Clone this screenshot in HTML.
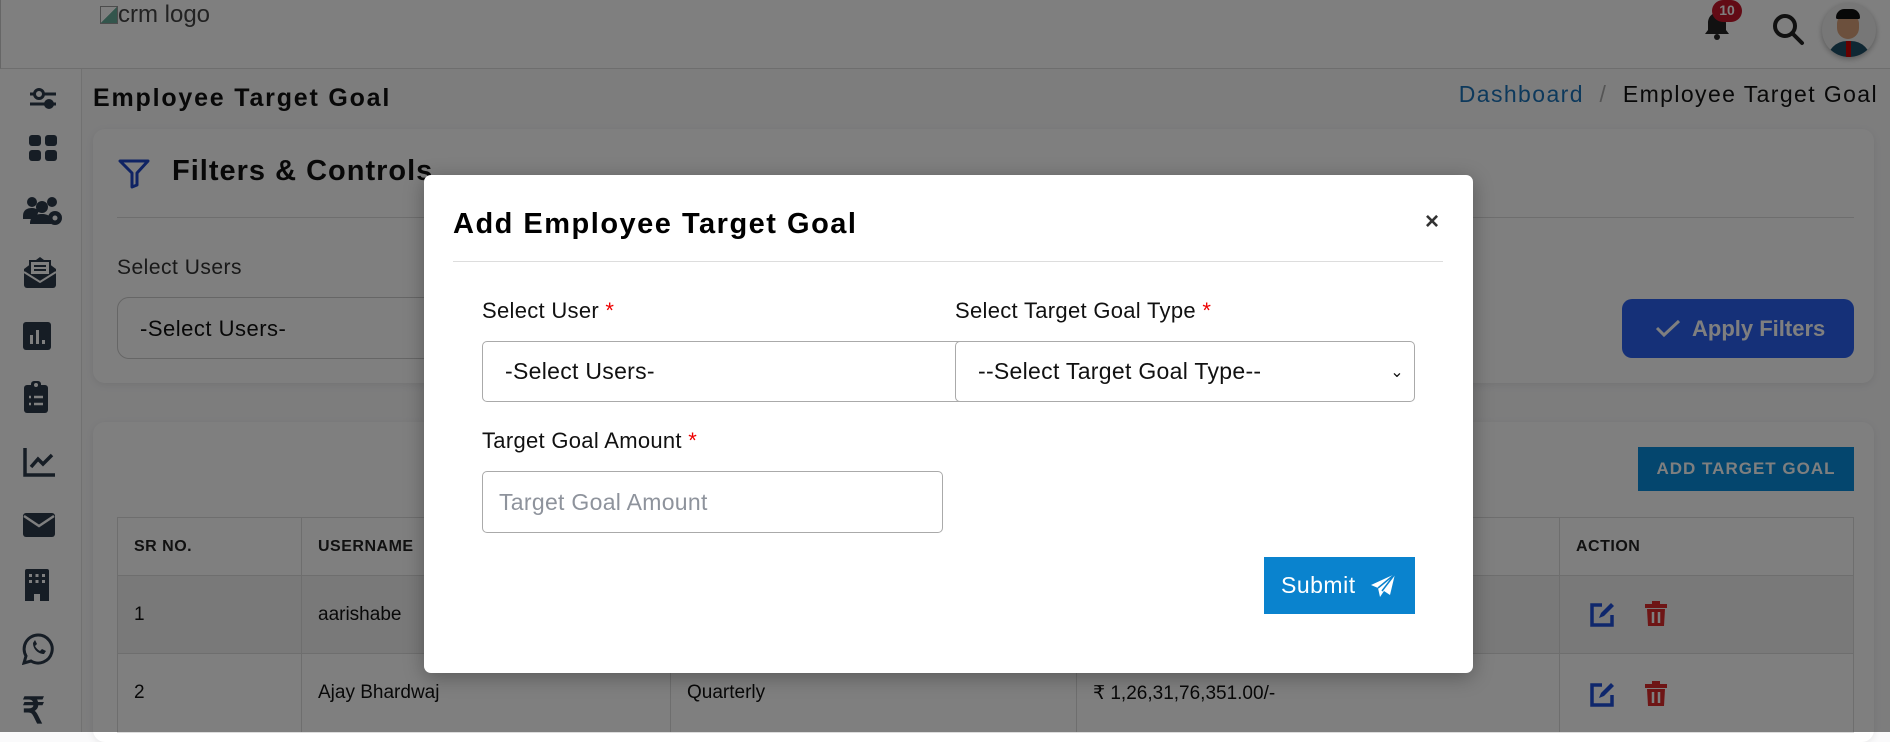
<!DOCTYPE html>
<html><head><meta charset="utf-8"><style>
*{box-sizing:border-box;margin:0;padding:0}
body{width:1890px;height:732px;overflow:hidden;background:#fafafb;font-family:"Liberation Sans",sans-serif;position:relative;color:#111}
.abs{position:absolute}
.hdr{left:0;top:0;width:1890px;height:69px;background:#fff;border-bottom:1px solid #ddd;border-left:1px solid #ccc}
.side{left:0;top:69px;width:82px;height:663px;background:#fff;border-right:1px solid #e3e3e3}
.card{background:#fff;border-radius:12px;box-shadow:0 2px 8px rgba(0,0,0,.08)}
table{border-collapse:collapse;position:absolute;left:117px;top:517px;width:1737px;font-size:19px}
td,th{border:1px solid #ddd;text-align:left;padding-left:16px}
th{height:58px;font-size:16px;font-weight:bold;color:#222;letter-spacing:.5px}
tr.r1 td{height:78px;background:#f2f2f2}
tr.r2 td{height:79px}
.ov{left:0;top:0;width:1890px;height:732px;background:rgba(0,0,0,.5)}
.modal{left:424px;top:175px;width:1049px;height:498px;background:#fff;border-radius:7px}
.lbl{font-size:22px;color:#111;letter-spacing:.3px}
.req{color:#e00}
.inp{border:1px solid #aaa;border-radius:5px;background:#fff;font-size:23px;display:flex;align-items:center;letter-spacing:.3px}
</style></head><body>
<div class="abs hdr"></div>
<div class="abs" style="left:100px;top:1px;font-size:24px;color:#444"><span style="display:inline-block;width:18px;height:18px;border:1px solid #999;background:linear-gradient(135deg,#fff 50%,#6a9 50%);vertical-align:-2px"></span>crm logo</div>
<svg class="abs" style="left:1700px;top:10px" width="34" height="32" viewBox="0 0 34 32"><path d="M17 3c-6 0-9 5-9 10v7l-3 4h24l-3-4v-7c0-5-3-10-9-10z" fill="#222"/><circle cx="17" cy="27" r="3" fill="#222"/></svg>
<div class="abs" style="left:1712px;top:0;width:30px;height:22px;border-radius:11px;background:#c4162a;color:#fff;font-size:14px;font-weight:bold;text-align:center;line-height:20px">10</div>
<svg class="abs" style="left:1770px;top:12px" width="36" height="34"><circle cx="15" cy="14" r="10" stroke="#222" stroke-width="4" fill="none"/><path d="M22 21l10 10" stroke="#222" stroke-width="4" stroke-linecap="round"/></svg>
<div class="abs" style="left:1822px;top:3px;width:54px;height:54px;border-radius:50%;background:#eee;overflow:hidden;box-shadow:0 2px 6px rgba(0,0,0,.3)">
<div class="abs" style="left:15px;top:10px;width:22px;height:26px;border-radius:11px;background:#d9a07a"></div>
<div class="abs" style="left:14px;top:6px;width:24px;height:10px;border-radius:10px 10px 2px 2px;background:#111"></div>
<div class="abs" style="left:5px;top:38px;width:44px;height:24px;border-radius:20px 20px 0 0;background:#1f4f67"></div>
<div class="abs" style="left:24px;top:38px;width:5px;height:16px;background:#c00"></div></div>
<div class="abs side"></div>
<svg class="abs" style="left:26px;top:84px" width="34" height="30"><path d="M4 10h26M4 20h26" stroke="#2d3a4b" stroke-width="3"/><circle cx="13" cy="10" r="4.5" fill="#fff" stroke="#2d3a4b" stroke-width="3"/><circle cx="23" cy="20" r="5" fill="#2d3a4b"/></svg>
<svg class="abs" style="left:28px;top:134px" width="30" height="30"><rect x="1" y="1" width="12" height="11" rx="3" fill="#2d3a4b"/><rect x="17" y="1" width="12" height="11" rx="3" fill="#2d3a4b"/><rect x="1" y="16" width="12" height="11" rx="3" fill="#2d3a4b"/><rect x="17" y="16" width="12" height="11" rx="3" fill="#2d3a4b"/></svg>
<svg class="abs" style="left:22px;top:194px" width="42" height="32"><circle cx="10" cy="8" r="5" fill="#2d3a4b"/><circle cx="30" cy="8" r="5" fill="#2d3a4b"/><circle cx="20" cy="13" r="6" fill="#2d3a4b"/><path d="M1 22c0-6 4-8 9-8s7 3 7 3l-4 8H1z M8 30c0-8 5-10 12-10s9 4 9 4v6z" fill="#2d3a4b"/><circle cx="33" cy="24" r="7" fill="#2d3a4b"/><circle cx="33" cy="24" r="2.5" fill="#fff"/></svg>
<svg class="abs" style="left:22px;top:255px" width="36" height="34"><path d="M2 14l16-12 16 12v16a3 3 0 0 1-3 3H5a3 3 0 0 1-3-3z" fill="#2d3a4b"/><rect x="8" y="6" width="20" height="14" fill="#fff" stroke="#2d3a4b" stroke-width="2"/><path d="M12 11h12M12 15h12" stroke="#2d3a4b" stroke-width="2"/><path d="M2 17l16 10 16-10" stroke="#fff" stroke-width="2" fill="none"/></svg>
<svg class="abs" style="left:22px;top:321px" width="30" height="30"><rect x="1" y="1" width="28" height="28" rx="3" fill="#2d3a4b"/><rect x="8" y="14" width="3" height="9" fill="#fff"/><rect x="14" y="9" width="3" height="14" fill="#fff"/><rect x="20" y="19" width="3" height="4" fill="#fff"/></svg>
<svg class="abs" style="left:23px;top:380px" width="26" height="34"><rect x="1" y="5" width="24" height="28" rx="3" fill="#2d3a4b"/><rect x="8" y="1" width="10" height="8" rx="3" fill="#2d3a4b"/><circle cx="13" cy="5" r="2" fill="#fff"/><path d="M6 17h2M11 17h9M6 24h2M11 24h9" stroke="#fff" stroke-width="2.5"/></svg>
<svg class="abs" style="left:22px;top:446px" width="34" height="32"><path d="M3 2v27h30" stroke="#2d3a4b" stroke-width="3.5" fill="none"/><path d="M9 21l7-8 5 5 9-9" stroke="#2d3a4b" stroke-width="3.5" fill="none"/></svg>
<svg class="abs" style="left:22px;top:512px" width="34" height="26"><rect x="1" y="1" width="32" height="24" rx="3" fill="#2d3a4b"/><path d="M2 4l15 10 15-10" stroke="#fff" stroke-width="2.5" fill="none"/></svg>
<svg class="abs" style="left:24px;top:568px" width="26" height="34"><path d="M1 3a2 2 0 0 1 2-2h20a2 2 0 0 1 2 2v30h-9v-7h-6v7H1z" fill="#2d3a4b"/><g fill="#fff"><rect x="5" y="6" width="3" height="3"/><rect x="11.5" y="6" width="3" height="3"/><rect x="18" y="6" width="3" height="3"/><rect x="5" y="12" width="3" height="3"/><rect x="11.5" y="12" width="3" height="3"/><rect x="18" y="12" width="3" height="3"/></g></svg>
<svg class="abs" style="left:22px;top:633px" width="32" height="32"><path d="M16 2a14 14 0 0 0-12 21l-2 7 7-2a14 14 0 1 0 7-26z" stroke="#2d3a4b" stroke-width="3" fill="none"/><path d="M11 10c0 6 5 11 11 11l2-3-4-2-2 2c-2-1-4-3-5-5l2-2-2-4z" fill="#2d3a4b"/></svg>
<div class="abs" style="left:22px;top:690px;font-size:36px;font-weight:bold;color:#2d3a4b">₹</div>

<div class="abs" style="left:93px;top:84px;font-size:25px;font-weight:bold;letter-spacing:1.8px">Employee Target Goal</div>
<div class="abs" style="right:12px;top:81px;font-size:23px;color:#111;letter-spacing:1.4px"><span style="color:#1a73b8">Dashboard</span> <span style="color:#aaa">&nbsp;/&nbsp;</span> Employee Target Goal</div>
<div class="abs card" style="left:93px;top:129px;width:1781px;height:254px"></div>
<svg class="abs" style="left:117px;top:157px" width="34" height="32"><path d="M3 4h28L20 16v12l-5 2V16z" stroke="#1e47c8" stroke-width="3" fill="none" stroke-linejoin="round"/></svg>
<div class="abs" style="left:172px;top:155px;font-size:29px;font-weight:bold;color:#111;letter-spacing:1px">Filters &amp; Controls</div>
<div class="abs" style="left:117px;top:217px;width:1737px;height:1px;background:#ddd"></div>
<div class="abs" style="left:117px;top:256px;font-size:21px;color:#333;letter-spacing:.5px">Select Users</div>
<div class="abs" style="left:117px;top:297px;width:500px;height:62px;border:1px solid #ccc;border-radius:12px;font-size:22px;padding:18px 22px;background:#fff;letter-spacing:.5px">-Select Users-</div>
<div class="abs" style="left:1622px;top:299px;width:232px;height:59px;border-radius:10px;background:#2a60f0;color:#fff;font-size:22px;font-weight:bold;line-height:59px;padding-left:70px">Apply Filters</div>
<svg class="abs" style="left:1655px;top:318px" width="26" height="20"><path d="M2 10l7 7 15-14" stroke="#fff" stroke-width="3" fill="none"/></svg>
<div class="abs card" style="left:93px;top:422px;width:1781px;height:320px"></div>
<div class="abs" style="left:1638px;top:447px;width:216px;height:44px;background:#088cdc;color:#fff;font-size:17px;font-weight:bold;line-height:44px;text-align:center;letter-spacing:1px">ADD TARGET GOAL</div>
<table>
<tr><th style="width:184px">SR NO.</th><th style="width:369px">USERNAME</th><th style="width:406px"></th><th style="width:483px"></th><th>ACTION</th></tr>
<tr class="r1"><td>1</td><td>aarishabe</td><td></td><td></td><td></td></tr>
<tr class="r2"><td>2</td><td>Ajay Bhardwaj</td><td>Quarterly</td><td>₹ 1,26,31,76,351.00/-</td><td></td></tr>
</table>
<svg class="abs" style="left:1589px;top:602px" width="26" height="26"><path d="M13 3H3v20h20V13" stroke="#1e4fd8" stroke-width="3.5" fill="none"/><path d="M10 16l2-5 10-10 3 3-10 10z" fill="#1e4fd8"/></svg>
<svg class="abs" style="left:1645px;top:601px" width="22" height="26"><rect x="0" y="3" width="22" height="4" fill="#dc2a2a"/><rect x="7" y="0" width="8" height="4" fill="#dc2a2a"/><path d="M2 8h18l-1 17H3z" fill="#dc2a2a"/><path d="M8 11v11M14 11v11" stroke="#fff" stroke-width="2.5"/></svg>
<svg class="abs" style="left:1589px;top:682px" width="26" height="26"><path d="M13 3H3v20h20V13" stroke="#1e4fd8" stroke-width="3.5" fill="none"/><path d="M10 16l2-5 10-10 3 3-10 10z" fill="#1e4fd8"/></svg>
<svg class="abs" style="left:1645px;top:681px" width="22" height="26"><rect x="0" y="3" width="22" height="4" fill="#dc2a2a"/><rect x="7" y="0" width="8" height="4" fill="#dc2a2a"/><path d="M2 8h18l-1 17H3z" fill="#dc2a2a"/><path d="M8 11v11M14 11v11" stroke="#fff" stroke-width="2.5"/></svg>

<div class="abs ov"></div>
<div class="abs modal" style="box-shadow:0 4px 20px rgba(0,0,0,.3)"></div>
<div class="abs" style="left:453px;top:208px;font-size:29px;font-weight:bold;color:#000;letter-spacing:1.5px">Add Employee Target Goal</div>
<div class="abs" style="left:1425px;top:208px;font-size:24px;color:#333;font-weight:bold">×</div>
<div class="abs" style="left:453px;top:261px;width:990px;height:1px;background:#ddd"></div>
<div class="abs lbl" style="left:482px;top:298px">Select User <span class="req">*</span></div>
<div class="abs lbl" style="left:955px;top:298px">Select Target Goal Type <span class="req">*</span></div>
<div class="abs inp" style="left:482px;top:341px;width:482px;height:61px;padding-left:22px">-Select Users-</div>
<div class="abs inp" style="left:955px;top:341px;width:460px;height:61px;padding-left:22px">--Select Target Goal Type--<span style="position:absolute;right:10px;font-size:16px">⌄</span></div>
<div class="abs lbl" style="left:482px;top:428px">Target Goal Amount <span class="req">*</span></div>
<div class="abs inp" style="left:482px;top:471px;width:461px;height:62px;padding-left:16px;color:#8e939c">Target Goal Amount</div>
<div class="abs" style="left:1264px;top:557px;width:151px;height:57px;background:#0a83ce;color:#fff;font-size:23px;line-height:57px;padding-left:17px;letter-spacing:.5px">Submit</div>
<svg class="abs" style="left:1370px;top:573px" width="26" height="26"><path d="M25 1L1 12l7 3 2 9 4-6 6 4z" fill="#fff"/><path d="M8 15L25 1 12 18" stroke="#0a83ce" stroke-width="1.5" fill="none"/></svg>
</body></html>
